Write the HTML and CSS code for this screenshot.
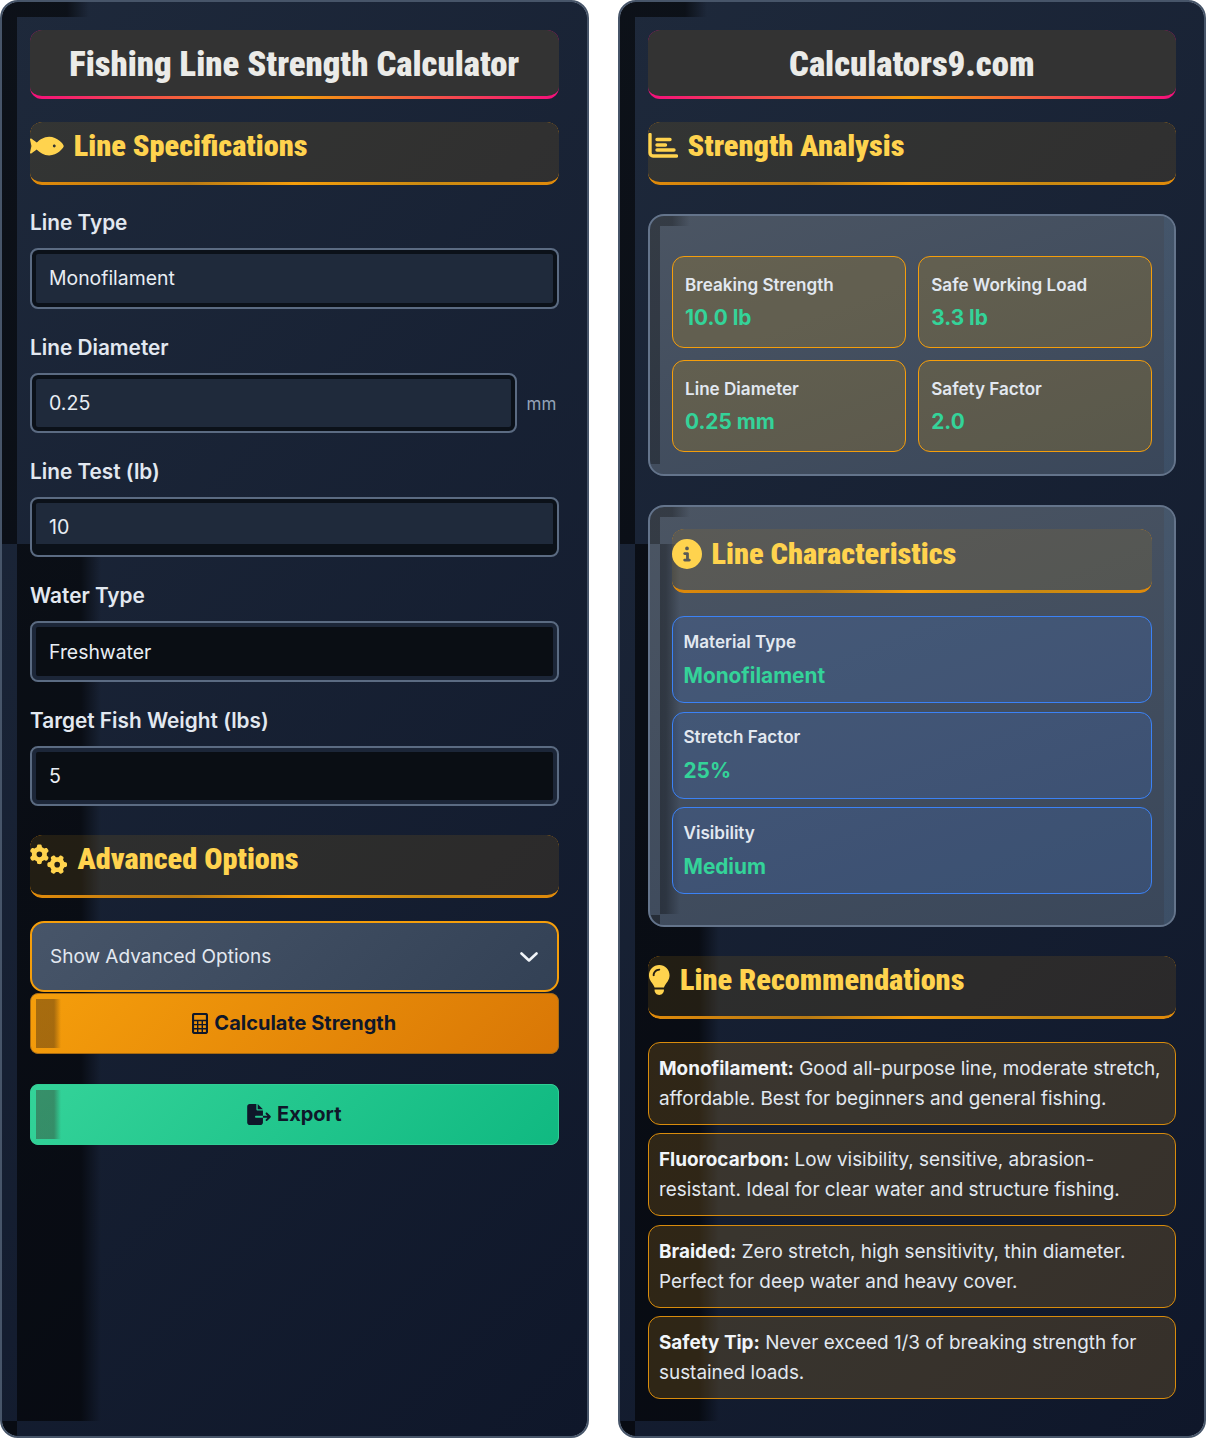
FILE: index.html
```html
<!DOCTYPE html>
<html lang="en">
<head>
<meta charset="utf-8">
<title>Fishing Line Strength Calculator</title>
<link rel="stylesheet" href="styles.css">
</head>
<body>
<main class="page">
  <section class="panel">
    <h1 class="title">Fishing Line Strength Calculator</h1>
    <h2 class="heading"><svg class="icon" viewBox="0 0 576 512"><path d="M327.1 96c-89.97 0-168.54 54.77-212.27 101.63L27.5 131.58c-12.13-9.18-30.24.6-27.14 14.66L24.54 256 .35 365.77c-3.1 14.06 15.01 23.83 27.14 14.66l87.33-66.05C158.55 361.23 237.13 416 327.1 416 464.56 416 576 288 576 256S464.56 96 327.1 96zm87.43 184c-13.25 0-24-10.75-24-24 0-13.26 10.75-24 24-24 13.26 0 24 10.74 24 24 0 13.25-10.75 24-24 24z"/></svg><span class="cond">Line Specifications</span></h2>
    <div class="field">
      <label class="label" for="line-type">Line Type</label>
      <select class="input" id="line-type"><option>Monofilament</option></select>
    </div>
    <div class="field">
      <label class="label" for="diameter">Line Diameter</label>
      <div class="unit-row">
        <input class="input num" id="diameter" value="0.25">
        <span class="unit">mm</span>
      </div>
    </div>
    <div class="field">
      <label class="label" for="test">Line Test (lb)</label>
      <input class="input num split" id="test" value="10">
    </div>
    <div class="field">
      <label class="label" for="water">Water Type</label>
      <select class="input dark" id="water"><option>Freshwater</option></select>
    </div>
    <div class="field field-last">
      <label class="label" for="weight">Target Fish Weight (lbs)</label>
      <input class="input num dark" id="weight" value="5">
    </div>
    <h2 class="heading"><svg class="icon" viewBox="0 0 640 512"><path d="M308.5 135.3c7.1-6.3 9.9-16.2 6.2-25c-2.3-5.3-4.8-10.5-7.6-15.5L304 89.4c-3-5-6.3-9.9-9.8-14.6c-5.7-7.6-15.7-10.1-24.7-7.1l-28.2 9.3c-10.7-8.8-23-16-36.2-20.9L199 27.1c-1.9-9.3-9.1-16.7-18.5-17.8C173.9 8.4 167.2 8 160.4 8h-.7c-6.8 0-13.5 .4-20.1 1.2c-9.4 1.1-16.6 8.6-18.5 17.8L115 56.1c-13.3 5-25.5 12.1-36.2 20.9L50.5 67.8c-9-3-19-.5-24.7 7.1c-3.5 4.7-6.8 9.6-9.9 14.6l-3 5.3c-2.8 5-5.3 10.2-7.6 15.6c-3.7 8.7-.9 18.6 6.2 25l22.2 19.8C32.6 161.9 32 168.9 32 176s.6 14.1 1.7 20.9L11.5 216.7c-7.1 6.3-9.9 16.2-6.2 25c2.3 5.3 4.8 10.5 7.6 15.6l3 5.2c3 5.1 6.3 9.9 9.9 14.6c5.7 7.6 15.7 10.1 24.7 7.1l28.2-9.3c10.7 8.8 23 16 36.2 20.9l6.1 29.1c1.9 9.3 9.1 16.7 18.5 17.8c6.7 .8 13.5 1.2 20.4 1.2s13.7-.4 20.4-1.2c9.4-1.1 16.6-8.6 18.5-17.8l6.1-29.1c13.3-5 25.5-12.1 36.2-20.9l28.2 9.3c9 3 19 .5 24.7-7.1c3.5-4.7 6.8-9.5 9.8-14.6l3.1-5.4c2.8-5 5.3-10.2 7.6-15.5c3.7-8.7 .9-18.6-6.2-25l-22.2-19.8c1.1-6.8 1.7-13.8 1.7-20.9s-.6-14.1-1.7-20.9l22.2-19.8zM112 176a48 48 0 1 1 96 0 48 48 0 1 1 -96 0zM504.7 500.5c6.3 7.1 16.2 9.9 25 6.2c5.3-2.3 10.5-4.8 15.5-7.6l5.4-3.1c5-3 9.9-6.3 14.6-9.8c7.6-5.7 10.1-15.7 7.1-24.7l-9.3-28.2c8.8-10.7 16-23 20.9-36.2l29.1-6.1c9.3-1.9 16.7-9.1 17.8-18.5c.8-6.7 1.2-13.5 1.2-20.4s-.4-13.7-1.2-20.4c-1.1-9.4-8.6-16.6-17.8-18.5L583.9 307c-5-13.3-12.1-25.5-20.9-36.2l9.3-28.2c3-9 .5-19-7.1-24.7c-4.7-3.5-9.6-6.8-14.6-9.9l-5.3-3c-5-2.8-10.2-5.3-15.6-7.6c-8.7-3.7-18.6-.9-25 6.2l-19.8 22.2c-6.8-1.1-13.8-1.7-20.9-1.7s-14.1 .6-20.9 1.7l-19.8-22.2c-6.3-7.1-16.2-9.9-25-6.2c-5.3 2.3-10.5 4.8-15.6 7.6l-5.2 3c-5.1 3-9.9 6.3-14.6 9.9c-7.6 5.7-10.1 15.7-7.1 24.7l9.3 28.2c-8.8 10.7-16 23-20.9 36.2L315.1 313c-9.3 1.9-16.7 9.1-17.8 18.5c-.8 6.7-1.2 13.5-1.2 20.4s.4 13.7 1.2 20.4c1.1 9.4 8.6 16.6 17.8 18.5l29.1 6.1c5 13.3 12.1 25.5 20.9 36.2l-9.3 28.2c-3 9-.5 19 7.1 24.7c4.7 3.5 9.5 6.8 14.6 9.8l5.4 3.1c5 2.8 10.2 5.3 15.5 7.6c8.7 3.7 18.6 .9 25-6.2l19.8-22.2c6.8 1.1 13.8 1.7 21 1.7s14.1-.6 21-1.7l19.8 22.2zM464 304a48 48 0 1 1 0 96 48 48 0 1 1 0-96z"/></svg><span class="cond">Advanced Options</span></h2>
    <button class="toggle" type="button"><span>Show Advanced Options</span><svg class="chevron" viewBox="0 0 18 10"><path d="M1.500 1.500 9 8.500l7.500-7"/></svg></button>
    <button class="action calc" type="button"><svg class="btn-icon calc-icon" viewBox="0 0 16 21"><rect x="1" y="1" width="14" height="19" rx="1.600"/><path d="M1 7.500h14M1 11.600h14M1 15.700h14M5.700 7.500V20M10.300 7.500V20"/></svg>Calculate Strength</button>
    <button class="action export" type="button"><svg class="btn-icon wide" viewBox="0 0 576 512"><path d="M0 64C0 28.700 28.700 0 64 0H224V128c0 17.700 14.300 32 32 32H384V288H216c-13.300 0-24 10.700-24 24s10.700 24 24 24H384V448c0 35.300-28.700 64-64 64H64c-35.300 0-64-28.700-64-64V64zM384 336V288H494.100l-39-39c-9.400-9.400-9.400-24.600 0-33.900s24.600-9.400 33.900 0l80 80c9.400 9.400 9.400 24.600 0 33.900l-80 80c-9.400 9.400-24.600 9.400-33.900 0s-9.400-24.600 0-33.900l39-39H384zm0-208H256V0L384 128z"/></svg>Export</button>
  </section>

  <section class="panel">
    <h1 class="title">Calculators9.com</h1>
    <h2 class="heading"><svg class="icon chart" viewBox="0 0 30 25"><path d="M2 1.500V20a3 3 0 0 0 3 3h23.500M9 6.500h13M9 12h8.500M9 17h17"/></svg><span class="cond">Strength Analysis</span></h2>
    <div class="card">
      <div class="stats">
        <div class="stat"><div class="stat-label">Breaking Strength</div><div class="stat-value">10.0 lb</div></div>
        <div class="stat"><div class="stat-label">Safe Working Load</div><div class="stat-value">3.3 lb</div></div>
        <div class="stat"><div class="stat-label">Line Diameter</div><div class="stat-value">0.25 mm</div></div>
        <div class="stat"><div class="stat-label">Safety Factor</div><div class="stat-value">2.0</div></div>
      </div>
    </div>
    <div class="card card-split">
      <h2 class="heading"><svg class="icon" viewBox="0 0 512 512"><path d="M256 512A256 256 0 1 0 256 0a256 256 0 1 0 0 512zM216 336h24V272H216c-13.300 0-24-10.700-24-24s10.700-24 24-24h48c13.300 0 24 10.700 24 24v88h8c13.300 0 24 10.700 24 24s-10.700 24-24 24H216c-13.300 0-24-10.700-24-24s10.700-24 24-24zm40-208a32 32 0 1 1 0 64 32 32 0 1 1 0-64z"/></svg><span class="cond">Line Characteristics</span></h2>
      <div class="trait"><div class="stat-label">Material Type</div><div class="stat-value">Monofilament</div></div>
      <div class="trait"><div class="stat-label">Stretch Factor</div><div class="stat-value">25%</div></div>
      <div class="trait"><div class="stat-label">Visibility</div><div class="stat-value">Medium</div></div>
    </div>
    <h2 class="heading"><svg class="icon" viewBox="0 0 384 512"><path d="M272 384c9.600-31.900 29.500-59.100 49.200-86.200l0 0c5.200-7.100 10.400-14.200 15.400-21.400c19.800-28.500 31.400-63 31.400-100.300C368 78.800 289.200 0 192 0S16 78.800 16 176c0 37.300 11.600 71.900 31.400 100.300c5 7.200 10.200 14.300 15.400 21.400l0 0c19.800 27.100 39.700 54.400 49.200 86.200H272zM192 512c44.200 0 80-35.800 80-80V416H112v16c0 44.200 35.800 80 80 80zM112 176c0 8.800-7.200 16-16 16s-16-7.200-16-16c0-61.900 50.100-112 112-112c8.800 0 16 7.200 16 16s-7.200 16-16 16c-44.200 0-80 35.800-80 80z"/></svg><span class="cond">Line Recommendations</span></h2>
    <p class="rec"><strong>Monofilament:</strong> Good all-purpose line, moderate stretch, affordable. Best for beginners and general fishing.</p>
    <p class="rec"><strong>Fluorocarbon:</strong> Low visibility, sensitive, abrasion-resistant. Ideal for clear water and structure fishing.</p>
    <p class="rec"><strong>Braided:</strong> Zero stretch, high sensitivity, thin diameter. Perfect for deep water and heavy cover.</p>
    <p class="rec"><strong>Safety Tip:</strong> Never exceed 1/3 of breaking strength for sustained loads.</p>
  </section>
</main>
</body>
</html>
```
FILE: styles.css
```css
* { box-sizing: border-box; }
html, body { margin: 0; padding: 0; background: #fff; }
body { font-family: Inter, "Liberation Sans", sans-serif; color: #e2e8f0; }

.page {
  display: grid;
  grid-template-columns: 1fr 1fr;
  column-gap: 29px;
  height: 1438px;
}

.panel {
  border: 2px solid #475569;
  border-radius: 18px;
  padding: 28px;
  overflow: hidden;
  background-color: #0f172a;
  background-repeat: no-repeat;
  background-origin: padding-box;
  background-clip: padding-box;
  background-image:
    linear-gradient(rgba(0,0,0,.58), rgba(0,0,0,.58)),
    linear-gradient(90deg, rgba(0,0,0,.58) 0, rgba(0,0,0,.58) 50px, transparent 72px),
    linear-gradient(90deg, rgba(0,0,0,.6) 0, rgba(0,0,0,.6) 64px, transparent 84px),
    linear-gradient(rgba(0,0,0,.6), rgba(0,0,0,.6)),
    linear-gradient(135deg, #1e293b 0%, #0f172a 100%);
  background-size:
    15px 542px,
    90px 15px,
    90px 877px,
    15px 15px,
    100% 100%;
  background-position:
    0 0,
    15px 0,
    15px 542px,
    0 1419px,
    0 0;
}

.cond {
  font-family: Roboto, "Liberation Sans", sans-serif;
  font-size: 30.300px;
  font-weight: 900;
  font-stretch: 75%;
}

.title {
  margin: 0 0 23px;
  height: 69px;
  padding: 1px 10px 0;
  display: flex;
  align-items: center;
  justify-content: center;
  font-family: Roboto, "Liberation Sans", sans-serif;
  font-stretch: 75%;
  font-size: 34.700px;
  font-weight: 900;
  color: #ebebe8;
  border-bottom: 3px solid transparent;
  border-radius: 12px;
  background:
    linear-gradient(#333333, #333333) padding-box,
    linear-gradient(90deg, #f50f7c 0%, #f59e0b 50%, #f50f7c 100%) border-box;
}

.heading {
  position: relative;
  margin: 0 0 23px;
  height: 63px;
  display: flex;
  align-items: flex-start;
  gap: 10px;
  font-size: 30px;
  line-height: 48px;
  font-weight: 700;
  color: #ffd34e;
  border-radius: 12px;
  background: rgba(181,125,23,.15);
}
.heading::after {
  content: "";
  position: absolute;
  inset: 0;
  border-bottom: 3px solid transparent;
  border-radius: inherit;
  background: linear-gradient(90deg, #e08a0a 0%, #b87a14 30%, #f59e0b 50%, #c98a12 75%, #e08a0a 100%) border-box;
  -webkit-mask: linear-gradient(#000 0 0) border-box, linear-gradient(#000 0 0) padding-box;
  -webkit-mask-composite: xor;
  mask-composite: exclude;
  pointer-events: none;
}

.icon { height: 30px; margin-top: 9px; fill: #ffd34e; flex: none; }
.icon.chart { width: 30px; height: 25px; margin-top: 11px; fill: none; stroke: #ffd34e; stroke-width: 3.400; stroke-linecap: round; }

.field { margin-bottom: 26.900px; }
.heading + .field { margin-top: 26.200px; }
.field-last { margin-bottom: 28.500px; }
.label {
  display: block;
  font-size: 20.800px;
  line-height: 24px;
  font-weight: 600;
  color: #e2e8f0;
  margin-bottom: 13px;
}
.unit-row { display: flex; align-items: center; gap: 10px; }
.unit { font-size: 17px; color: #94a3b8; width: 32px; margin-top: 3px; }

.input {
  display: block;
  width: 100%;
  height: 60.500px;
  padding: 0 17px;
  font-family: Inter, "Liberation Sans", sans-serif;
  font-size: 19.400px;
  color: #e8edf3;
  border: 2px solid #5b6b82;
  border-radius: 8px;
  outline: none;
  appearance: none;
  background: #1f2a3b;
  box-shadow: inset 0 0 0 4px #0b1119;
}
.input.num { font-size: 19.600px; }
.unit-row .input { flex: 1; width: auto; min-width: 0; }
.input.split {
  background: linear-gradient(#1f2a3b 45px, #0b1119 45px);
  box-shadow: inset 0 4px 0 #0b1119, inset 4px 0 0 #0b1119, inset -4px 0 0 #0b1119;
}
.input.dark {
  background: #0a0e14;
  box-shadow: inset 0 0 0 4px #1c2638;
}

.toggle {
  display: flex;
  width: 100%;
  height: 71px;
  align-items: center;
  justify-content: space-between;
  padding: 1px 19px 0 18px;
  font-family: inherit;
  font-size: 19px;
  color: #e2e8f0;
  border: 2px solid #f59e0b;
  border-radius: 14px;
  background: linear-gradient(135deg, #475569 0%, #334155 100%);
  margin-bottom: 1px;
}
.chevron { width: 18px; height: 10px; fill: none; stroke: #f1f5f9; stroke-width: 2.600; stroke-linecap: round; stroke-linejoin: round; }

.action {
  display: flex;
  width: 100%;
  height: 61px;
  align-items: center;
  justify-content: center;
  gap: 6px;
  font-family: inherit;
  font-size: 20px;
  font-weight: 700;
  color: #0f172a;
  border-radius: 8px;
  background-repeat: no-repeat;
}
.btn-icon { height: 21px; width: 16px; fill: #0f172a; flex: none; }
.btn-icon.wide { width: 24px; }
.calc-icon { fill: none; stroke: #0f172a; stroke-width: 2.200; }
.calc-icon path { stroke-width: 1.400; }
.calc {
  margin-bottom: 30px;
  border: 1px solid #a86a10;
  background-image:
    linear-gradient(90deg, rgba(60,40,20,.42) 18px, transparent 25px),
    linear-gradient(135deg, #f59e0b 0%, #d97706 100%);
  background-size: 26px 49px, 100% 100%;
  background-position: 5px 5px, 0 0;
}
.export {
  border: 1px solid #2fcf95;
  background-image:
    linear-gradient(90deg, rgba(60,50,40,.42) 18px, transparent 25px),
    linear-gradient(135deg, #34d399 0%, #10b981 100%);
  background-size: 26px 49px, 100% 100%;
  background-position: 5px 5px, 0 0;
}

.card {
  margin: 29px 0;
  padding: 22px;
  border: 2px solid #64748b;
  border-radius: 16px;
  background-color: #334155;
  background-repeat: no-repeat;
  background-origin: padding-box;
  background-clip: padding-box;
  background-image:
    linear-gradient(rgba(0,0,0,.3), rgba(0,0,0,.3)),
    linear-gradient(90deg, rgba(0,0,0,.3) 0, rgba(0,0,0,.3) 12px, transparent 30px),
    linear-gradient(rgba(70,110,150,.2), rgba(70,110,150,.2)),
    linear-gradient(160deg, #4b5563 0%, #3a475a 100%);
  background-size: 10px calc(100% - 10px), 30px 10px, 10px 100%, 100% 100%;
  background-position: 0 0, 10px 0, 100% 0, 0 0;
}
.card-split {
  background-image:
    linear-gradient(rgba(0,0,0,.3), rgba(0,0,0,.3)),
    linear-gradient(90deg, rgba(0,0,0,.3) 0, rgba(0,0,0,.3) 12px, transparent 30px),
    linear-gradient(90deg, rgba(0,0,0,.32) 0, rgba(0,0,0,.3) 6px, transparent 20px),
    linear-gradient(rgba(0,0,0,.4), rgba(0,0,0,.4)),
    linear-gradient(rgba(70,110,150,.2), rgba(70,110,150,.2)),
    linear-gradient(160deg, #4b5563 0%, #3a475a 100%);
  background-size: 10px 37px, 30px 10px, 24px 370px, 10px 10px, 10px 100%, 100% 100%;
  background-position: 0 0, 10px 0, 10px 37px, 0 100%, 100% 0, 0 0;
}

.stats {
  margin-top: 18px;
  display: grid;
  grid-template-columns: 1fr 1fr;
  column-gap: 12px;
  row-gap: 12px;
}
.stat {
  height: 92px;
  padding: 13.500px 12.500px;
  border: 1px solid #f59e0b;
  border-radius: 12px;
  background: rgba(225,160,10,.19);
}
.stat-label { font-size: 17.100px; line-height: 27px; font-weight: 600; color: #e2e8f0; margin-bottom: 6.500px; }
.stat-value { font-size: 20.800px; line-height: 27px; font-weight: 700; color: #34d399; }

.card-split .heading { height: 64px; margin-bottom: 23px; }
.card-split .heading .cond { line-height: 50px; }
.card-split .heading .icon { margin-top: 10px; }
.trait {
  height: 87px;
  margin-bottom: 8.500px;
  padding: 10.500px 11px;
  border: 1px solid #3b82f6;
  border-radius: 12px;
  background: rgba(59,130,246,.15);
}
.trait .stat-label { margin-bottom: 7px; }

.rec {
  margin: 0 0 8.500px;
  padding: 11px 10px 10px 10.500px;
  font-size: 18.900px;
  line-height: 30px;
  color: #e2e8f0;
  border: 1px solid #d98c0c;
  border-radius: 12px;
  background: rgba(245,170,40,.17);
}
.rec strong { font-weight: 700; color: #f1f5f9; }
```
